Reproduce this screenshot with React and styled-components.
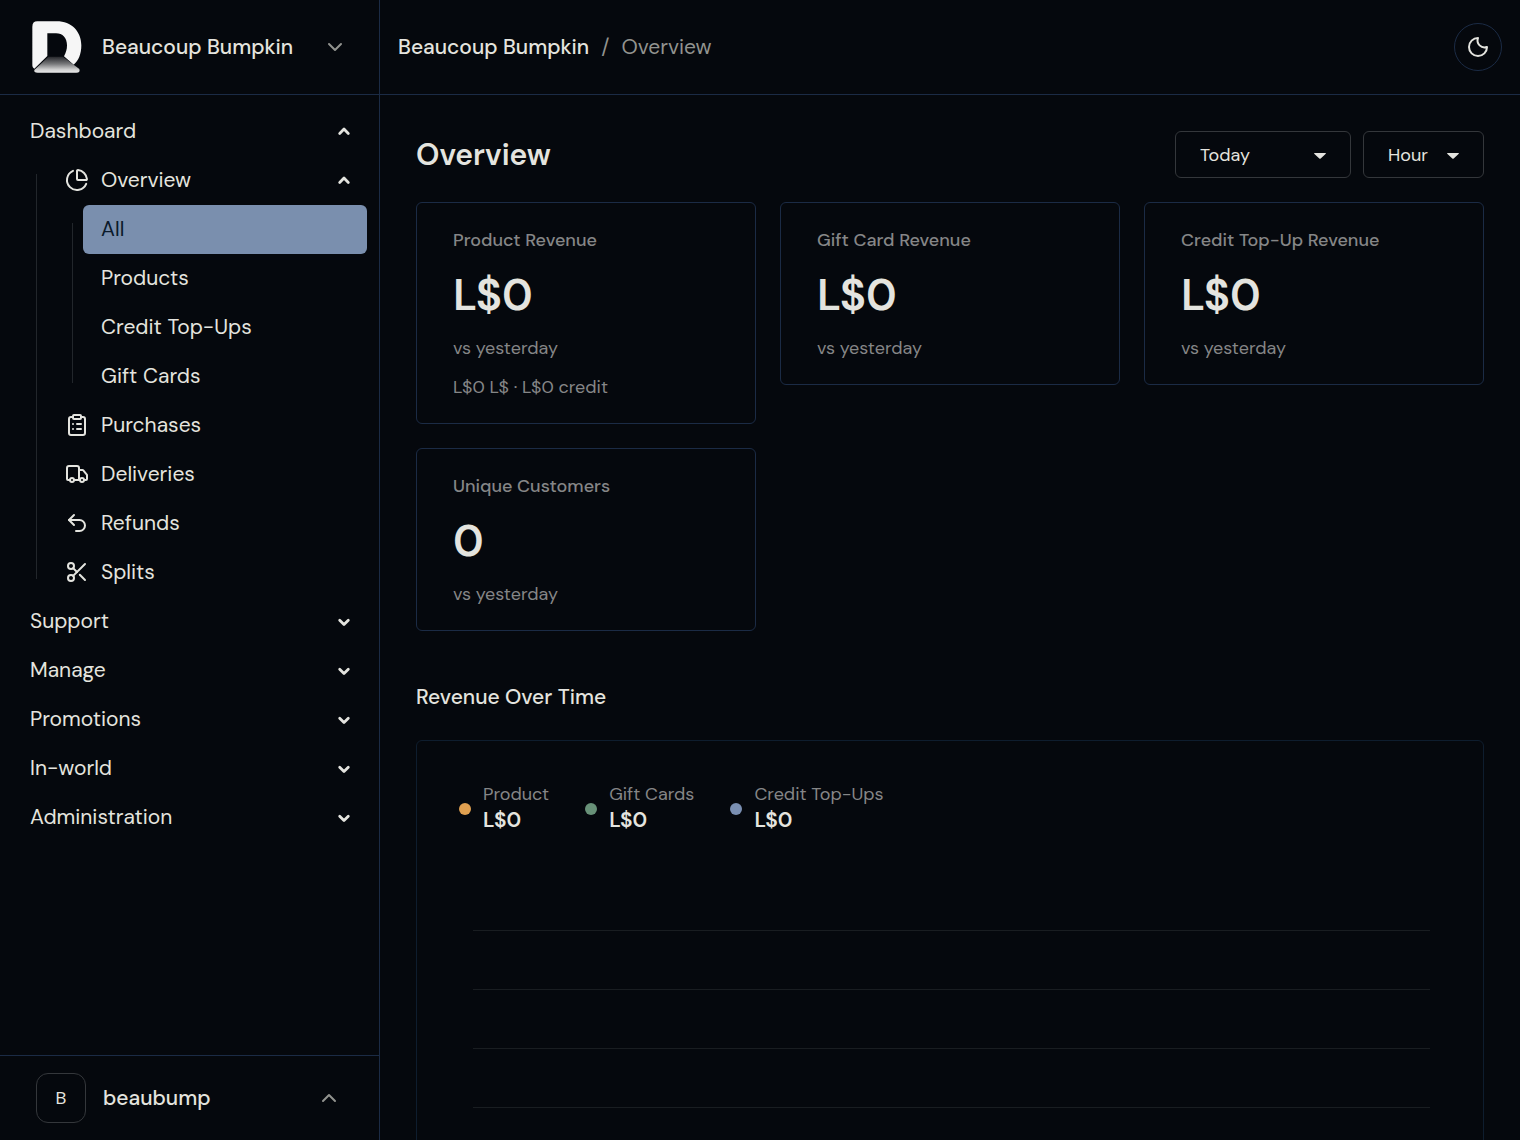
import React from 'react';
import styled, { createGlobalStyle } from "styled-components";
import { ChartPie, ClipboardList, Truck, Undo2, Scissors } from "lucide-react";

const GlobalStyle = createGlobalStyle`
*{
    box-sizing: border-box;
}
body{
    margin: 0;
    background: #05080d;
    color: #e4e4df;
    font-family: "DM Sans", Inter, "Open Sans", sans-serif;
    font-size: 21px;
    line-height: 30px;
}
button, select{
    font: inherit;
    color: inherit;
}
h1, h2, h3, p, ul{
    margin: 0;
    padding: 0;
}
ul{
    list-style: none;
}
a{
    color: inherit;
    text-decoration: none;
}
svg{
    display: block;
    flex: none;
}
`
const Container = styled.div`
display: flex;
height: 100vh;
overflow: hidden;
`
const Sidebar = styled.aside`
display: flex;
flex-direction: column;
flex: none;
width: 380px;
border-right: 1px solid #1b2b45;
`
const StoreButton = styled.button`
display: flex;
align-items: center;
flex: none;
gap: 20px;
width: 100%;
height: 95px;
padding: 0 32px;
border: 0;
border-bottom: 1px solid #1b2b45;
background: none;
font-weight: 500;
text-align: left;
cursor: pointer;
`
const ButtonText = styled.span`
flex: 1;
white-space: nowrap;
`
const Nav = styled.nav`
flex: 1;
padding: 12px;
overflow-y: auto;
scrollbar-width: none;
`
const rowStyle = `
display: flex;
align-items: center;
gap: 12px;
width: 100%;
height: 49px;
padding: 0 16px 2px 18px;
border: 0;
border-radius: 6px;
background: none;
text-align: left;
cursor: pointer;
`
const NavButton = styled.button`
${rowStyle}
`
const NavLink = styled.a`
${rowStyle}
background: ${({ $active }) => ($active ? "#7a8fae" : "none")};
color: ${({ $active }) => ($active ? "#0b1a2b" : "inherit")};
`
const NavGroup = styled.div`
display: flex;
gap: 10px;
padding-left: ${({ $nested }) => ($nested ? "25px" : "24px")};
ul{
    flex: 1;
}
`
const Rail = styled.span`
width: 1px;
margin: 18px 0;
background: #22262b;
`
const UserButton = styled(StoreButton)`
gap: 17px;
height: 85px;
padding: 0 38px 0 36px;
border-top: 1px solid #1b2b45;
border-bottom: 0;
`
const Avatar = styled.span`
display: grid;
place-items: center;
width: 50px;
height: 50px;
border: 1px solid #34373b;
border-radius: 12px;
font-size: 18px;
font-weight: 400;
`
const Main = styled.main`
display: flex;
flex-direction: column;
flex: 1;
min-width: 0;
`
const TopBar = styled.header`
display: flex;
align-items: center;
justify-content: space-between;
flex: none;
height: 95px;
padding: 0 18px;
border-bottom: 1px solid #1b2b45;
`
const Breadcrumb = styled.div`
display: flex;
gap: 12px;
color: #92938f;
a{
    color: #e4e4df;
    font-weight: 500;
}
`
const ThemeButton = styled.button`
display: grid;
place-items: center;
width: 48px;
height: 48px;
padding: 0;
border: 1px solid #1b2b45;
border-radius: 50%;
background: none;
cursor: pointer;
`
const Content = styled.div`
flex: 1;
padding: 36px;
overflow-y: auto;
scrollbar-width: none;
`
const TitleRow = styled.div`
display: flex;
align-items: center;
justify-content: space-between;
margin-bottom: 24px;
h1{
    font-size: 30px;
    font-weight: 600;
    line-height: 36px;
}
`
const Filters = styled.div`
display: flex;
gap: 12px;
`
const SelectBox = styled.div`
display: grid;
align-items: center;
width: ${({ $wide }) => ($wide ? "176px" : "121px")};
select, svg{
    grid-area: 1 / 1;
}
svg{
    justify-self: end;
    margin-right: 25px;
    pointer-events: none;
}
`
const Select = styled.select`
appearance: none;
width: 100%;
height: 47px;
padding: 0 24px;
border: 1px solid #34373b;
border-radius: 6px;
background: #05080d;
font-size: 18px;
`
const Cards = styled.div`
display: grid;
grid-template-columns: repeat(3, minmax(0, 1fr));
align-items: start;
gap: 24px;
`
const Card = styled.section`
padding: 24px 36px 22px;
border: 1px solid #1b2b45;
border-radius: 6px;
color: #858687;
font-size: 18px;
line-height: 27px;
h3{
    font-size: 18px;
    font-weight: 500;
}
`
const CardValue = styled.p`
margin: 14px 0 13px;
color: #e4e4df;
font-size: 44px;
font-weight: 600;
line-height: 54px;
`
const CardNote = styled.p`
margin-top: 12px;
`
const SectionTitle = styled.h2`
margin: 51px 0 28px;
font-size: 21px;
font-weight: 500;
line-height: 30px;
`
const ChartCard = styled.section`
padding: 40px 53px 40px 42px;
border: 1px solid #0e1d2e;
border-radius: 6px;
`
const Legend = styled.ul`
display: flex;
gap: 36px;
`
const LegendItem = styled.li`
display: flex;
align-items: center;
gap: 12px;
color: #858687;
font-size: 18px;
line-height: 26px;
&::before{
    content: "";
    width: 12px;
    height: 12px;
    border-radius: 50%;
    background: ${({ $color }) => $color};
}
strong{
    display: block;
    padding-bottom: 4px;
    color: #e4e4df;
    font-size: 21px;
    font-weight: 600;
}
`
const Plot = styled.div`
padding: 35px 0 0 14px;
`
const GridLine = styled.div`
height: 59px;
border-bottom: 1px solid #191d21;
`

const subPages = ["All", "Products", "Credit Top-Ups", "Gift Cards"];

const pages = [
    { name: "Purchases", Icon: ClipboardList },
    { name: "Deliveries", Icon: Truck },
    { name: "Refunds", Icon: Undo2 },
    { name: "Splits", Icon: Scissors },
];

const sections = ["Support", "Manage", "Promotions", "In-world", "Administration"];

const cards = [
    { title: "Product Revenue", value: "L$0", note: "L$0 L$ · L$0 credit" },
    { title: "Gift Card Revenue", value: "L$0" },
    { title: "Credit Top-Up Revenue", value: "L$0" },
    { title: "Unique Customers", value: "0" },
];

const series = [
    { name: "Product", color: "#e0a050" },
    { name: "Gift Cards", color: "#689178" },
    { name: "Credit Top-Ups", color: "#7a8fb2" },
];

function Logo(){
    return(
        <svg width="50" height="52" viewBox="24 26 150 156" aria-hidden="true">
            <defs>
                <linearGradient id="floor" x1="0" y1="0" x2="0" y2="1">
                    <stop offset="0" stopColor="#25262a" />
                    <stop offset="0.45" stopColor="#77787a" />
                    <stop offset="0.8" stopColor="#cfcfcf" />
                    <stop offset="1" stopColor="#e8e8e8" />
                </linearGradient>
            </defs>
            <path fill="#f6f6f6" d="M40 27H98C143 27 172 58 172 99C172 126 163 146 149 157L120 132C126 121 129 111 129 99C129 77 116 63 96 63H70V131L31 169C27 167 25 163 25 159V43Q25 27 40 27Z" />
            <path fill="url(#floor)" d="M73 133H117L166 170Q170 181 157 181H41Q29 181 31 173Z" />
        </svg>
    )
}

function Chevron({ up }){
    return(
        <svg width="24" height="24" viewBox="0 0 24 24" fill="none" stroke="#92938f" strokeWidth="2" strokeLinecap="round" strokeLinejoin="round">
            <path d={up ? "m18 15-6-6-6 6" : "m6 9 6 6 6-6"} />
        </svg>
    )
}

function RowArrow({ up }){
    return(
        <svg width="14" height="14" viewBox="0 0 14 14" fill="none" stroke="currentColor" strokeWidth="2.8" strokeLinecap="round" strokeLinejoin="round">
            <path d={up ? "M2.7 9.4 7 5.1l4.3 4.3" : "M2.7 6.2 7 10.500l4.300-4.300"} />
        </svg>
    )
}

function Dropdown({ label, options, wide }){
    return(
        <SelectBox $wide={wide}>
            <Select aria-label={label}>
                {options.map((option) => <option key={option}>{option}</option>)}
            </Select>
            <svg width="12" height="8" viewBox="0 0 12 8">
                <path fill="#e4e4df" d="M.6 2h10.800c.5 0 .7.5.4.8L6.700 7.500a1 1 0 0 1-1.400 0L.2 2.800C-.1 2.500.1 2 .6 2Z" />
            </svg>
        </SelectBox>
    )
}

function App(){
    return(
        <>
            <GlobalStyle />
            <Container>
                <Sidebar>
                    <StoreButton>
                        <Logo />
                        <ButtonText>Beaucoup Bumpkin</ButtonText>
                        <Chevron />
                    </StoreButton>
                    <Nav>
                        <NavButton>
                            <ButtonText>Dashboard</ButtonText>
                            <RowArrow up />
                        </NavButton>
                        <NavGroup>
                            <Rail />
                            <ul>
                                <li>
                                    <NavButton>
                                        <ChartPie size={24} />
                                        <ButtonText>Overview</ButtonText>
                                        <RowArrow up />
                                    </NavButton>
                                    <NavGroup $nested>
                                        <Rail />
                                        <ul>
                                            {subPages.map((name) => (
                                                <li key={name}>
                                                    <NavLink href="#" $active={name === "All"}>{name}</NavLink>
                                                </li>
                                            ))}
                                        </ul>
                                    </NavGroup>
                                </li>
                                {pages.map(({ name, Icon }) => (
                                    <li key={name}>
                                        <NavLink href="#"><Icon size={24} />{name}</NavLink>
                                    </li>
                                ))}
                            </ul>
                        </NavGroup>
                        {sections.map((name) => (
                            <NavButton key={name}>
                                <ButtonText>{name}</ButtonText>
                                <RowArrow />
                            </NavButton>
                        ))}
                    </Nav>
                    <UserButton>
                        <Avatar>B</Avatar>
                        <ButtonText>beaubump</ButtonText>
                        <Chevron up />
                    </UserButton>
                </Sidebar>
                <Main>
                    <TopBar>
                        <Breadcrumb>
                            <a href="#">Beaucoup Bumpkin</a>
                            <span>/</span>
                            <span>Overview</span>
                        </Breadcrumb>
                        <ThemeButton aria-label="Toggle theme">
                            <svg width="24" height="24" viewBox="0 0 24 24" fill="none" stroke="currentColor" strokeWidth="2" strokeLinecap="round" strokeLinejoin="round">
                                <path d="M12 3a7 7 0 0 0 9 9 9 9 0 1 1-9-9Z" />
                            </svg>
                        </ThemeButton>
                    </TopBar>
                    <Content>
                        <TitleRow>
                            <h1>Overview</h1>
                            <Filters>
                                <Dropdown label="Period" options={["Today", "Yesterday", "This week"]} wide />
                                <Dropdown label="Interval" options={["Hour", "Day"]} />
                            </Filters>
                        </TitleRow>
                        <Cards>
                            {cards.map(({ title, value, note }) => (
                                <Card key={title}>
                                    <h3>{title}</h3>
                                    <CardValue>{value}</CardValue>
                                    <p>vs yesterday</p>
                                    {note && <CardNote>{note}</CardNote>}
                                </Card>
                            ))}
                        </Cards>
                        <SectionTitle>Revenue Over Time</SectionTitle>
                        <ChartCard>
                            <Legend>
                                {series.map(({ name, color }) => (
                                    <LegendItem key={name} $color={color}>
                                        <div>{name}<strong>L$0</strong></div>
                                    </LegendItem>
                                ))}
                            </Legend>
                            <Plot>
                                {[4, 3, 2, 1, 0].map((line) => <GridLine key={line} />)}
                            </Plot>
                        </ChartCard>
                    </Content>
                </Main>
            </Container>
        </>
    )
}

export default App;
